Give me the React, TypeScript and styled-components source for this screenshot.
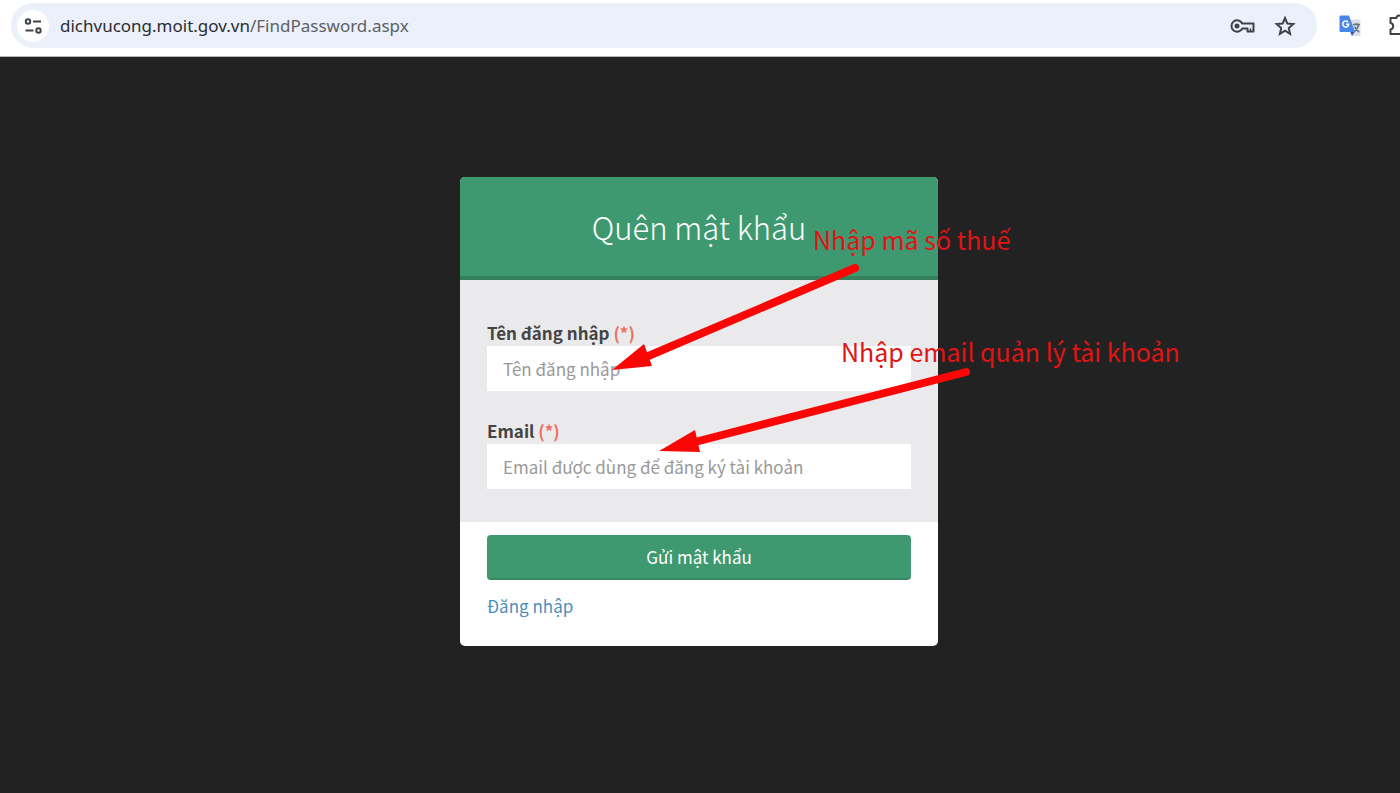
import React from "react";
import styled, { createGlobalStyle } from "styled-components";

const GlobalStyle = createGlobalStyle`
  *, *::before, *::after { box-sizing: border-box; }
  body { margin: 0; background: #222222; font-family: "Noto Sans CJK SC", "Noto Sans", sans-serif; }
`;

const Screen = styled.div`
  display: flex;
  flex-direction: column;
  min-height: 100vh;
  overflow-x: hidden;
`;

const Toolbar = styled.header`
  display: flex;
  align-items: center;
  height: 57px;
  padding: 0 0 5px 11px;
  background: #ffffff;
  border-bottom: 1px solid #b4b4b4;
`;

const AddressBar = styled.div`
  display: flex;
  flex: 1;
  align-items: center;
  height: 45px;
  padding: 0 16px 0 6px;
  border-radius: 23px;
  background: #ebf0fa;
`;

const IconButton = styled.button<{ $round?: boolean }>`
  display: flex;
  flex: none;
  align-items: center;
  justify-content: center;
  width: 32px;
  height: 32px;
  padding: 0;
  border: 0;
  border-radius: 16px;
  background: ${(p) => (p.$round ? "#ffffff" : "transparent")};
  color: #3f4247;
`;

const UrlText = styled.div`
  flex: 1;
  min-width: 0;
  padding-left: 11px;
  overflow: hidden;
  font-family: "Noto Sans", "Open Sans", sans-serif;
  font-size: 17px;
  line-height: 28px;
  white-space: nowrap;
  color: #2a2c30;
`;

const UrlPath = styled.span`
  color: #5c5f66;
`;

const AddressActions = styled.div`
  display: flex;
  gap: 10px;
`;

const Extensions = styled.div`
  display: flex;
  flex: none;
  gap: 18px;
  width: 83px;
  padding-left: 17px;
  overflow: hidden;
`;

const Page = styled.main`
  display: flex;
  flex: 1;
  justify-content: center;
  align-items: flex-start;
  padding: 120px 2px 0 0;
`;

const CardArea = styled.div`
  position: relative;
  width: 478px;
`;

const Card = styled.form`
  overflow: hidden;
  border-radius: 5px;
  background: #ffffff;
`;

const CardHeader = styled.div`
  padding: 26px 27px 25px;
  border-bottom: 4px solid #35805d;
  background: #3e9970;
  text-align: center;
`;

const Title = styled.h1`
  margin: 0;
  font-size: 31px;
  font-weight: 300;
  line-height: 48px;
  color: #ffffff;
`;

const CardBody = styled.div`
  display: flex;
  flex-direction: column;
  gap: 27px;
  padding: 40px 27px 33px;
  background: #eaeaec;
`;

const Field = styled.div`
  display: flex;
  flex-direction: column;
`;

const Label = styled.label`
  font-size: 17px;
  font-weight: 700;
  line-height: 26px;
  color: #444444;
`;

const Required = styled.span`
  color: #f0705f;
`;

const Input = styled.input`
  width: 100%;
  height: 45px;
  padding: 0 16px;
  border: 0;
  border-radius: 0;
  background: #ffffff;
  font-family: inherit;
  font-size: 17px;
  color: #444444;

  &::placeholder { color: #999999; opacity: 1; }
`;

const CardFooter = styled.div`
  display: flex;
  flex-direction: column;
  gap: 13px;
  padding: 13px 27px 27px;
`;

const Submit = styled.button`
  height: 45px;
  padding: 0;
  border: 0;
  border-bottom: 2px solid #388a65;
  border-radius: 4px;
  background: #3e9970;
  font-family: inherit;
  font-size: 17px;
  color: #ffffff;
`;

const LoginLink = styled.a`
  align-self: flex-start;
  font-size: 17px;
  line-height: 26px;
  color: #4a8fbc;
  text-decoration: none;
`;

const Note = styled.p<{ $x: number; $y: number }>`
  position: absolute;
  left: ${(p) => p.$x}px;
  top: ${(p) => p.$y}px;
  margin: 0;
  font-size: 25px;
  line-height: 32px;
  white-space: nowrap;
  color: #e01414;
`;

const Arrows = styled.svg`
  position: absolute;
  left: 0;
  top: 0;
  pointer-events: none;
`;

const TuneIcon = () => (
  <svg width="20" height="20" viewBox="0 0 20 20" fill="none" stroke="currentColor" strokeWidth="2">
    <circle cx="5" cy="5.500" r="2.2" />
    <path d="M10 5.500H18M2.500 14.500H10.500" />
    <circle cx="15.500" cy="14.500" r="2.200" />
  </svg>
);

const KeyIcon = () => (
  <svg width="26" height="20" viewBox="0 0 26 20" fill="none" stroke="currentColor" strokeWidth="2">
    <path d="M12.300 7.500A5.700 5.700 0 1 0 12.300 12.500H17.500V15.500H23.500V7.500Z" strokeLinejoin="round" />
    <path d="M20.500 12.500V15" strokeWidth="1.500" />
    <circle cx="7" cy="10" r="2.500" fill="currentColor" stroke="none" />
  </svg>
);

const StarIcon = () => (
  <svg width="22" height="22" viewBox="0 0 22 22" fill="none" stroke="currentColor" strokeWidth="2">
    <path d="M11 3L13.300 8.500L19.300 9L14.800 13L16.100 18.800L11 15.700L5.900 18.800L7.200 13L2.700 9L8.700 8.500Z" />
  </svg>
);

const TranslateIcon = () => (
  <svg width="22" height="22" viewBox="0 0 22 22">
    <path d="M9 4.500H20.500Q21.500 4.500 21.500 5.500V20Q21.500 21 20.500 21H13Z" fill="#dcdfe3" />
    <path d="M14 9.500H21M17.500 8V9.500M19.800 9.500Q18.500 14.500 14.500 17M15.500 11.500Q17 15 20.300 17.200" stroke="#5f7085" strokeWidth="1.400" fill="none" />
    <path d="M11 16.500H16L13 21Z" fill="#3257b8" />
    <path d="M1.500 0.500H10L16 17H1.500Q0.500 17 0.500 16V1.500Q0.500 0.500 1.500 0.500Z" fill="#4a86e8" />
    <path d="M9 7A3 3 0 1 0 9.700 9.300H7" stroke="#ffffff" strokeWidth="1.500" fill="none" />
  </svg>
);

const PuzzleIcon = () => (
  <svg width="24" height="24" viewBox="0 0 24 24" fill="none" stroke="currentColor" strokeWidth="2">
    <path d="M2.500 4H8.500A2.500 2.500 0 0 1 13.500 4H19V20H2.500V15.500A3.300 3.300 0 0 0 2.500 9Z" strokeLinejoin="round" />
  </svg>
);

export default function App() {
  return (
    <Screen>
      <GlobalStyle />
      <Toolbar>
        <AddressBar>
          <IconButton $round type="button" aria-label="Site information"><TuneIcon /></IconButton>
          <UrlText>dichvucong.moit.gov.vn<UrlPath>/FindPassword.aspx</UrlPath></UrlText>
          <AddressActions>
            <IconButton type="button" aria-label="Passwords"><KeyIcon /></IconButton>
            <IconButton type="button" aria-label="Bookmark"><StarIcon /></IconButton>
          </AddressActions>
        </AddressBar>
        <Extensions>
          <IconButton type="button" aria-label="Translate"><TranslateIcon /></IconButton>
          <IconButton type="button" aria-label="Extensions"><PuzzleIcon /></IconButton>
        </Extensions>
      </Toolbar>
      <Page>
        <CardArea>
          <Card onSubmit={(e) => e.preventDefault()}>
            <CardHeader><Title>Quên mật khẩu</Title></CardHeader>
            <CardBody>
              <Field>
                <Label htmlFor="username">Tên đăng nhập <Required>(*)</Required></Label>
                <Input id="username" type="text" placeholder="Tên đăng nhập" />
              </Field>
              <Field>
                <Label htmlFor="email">Email <Required>(*)</Required></Label>
                <Input id="email" type="email" placeholder="Email được dùng để đăng ký tài khoản" />
              </Field>
            </CardBody>
            <CardFooter>
              <Submit type="submit">Gửi mật khẩu</Submit>
              <LoginLink href="#login">Đăng nhập</LoginLink>
            </CardFooter>
          </Card>
          <Arrows width="520" height="290" viewBox="0 0 520 290" aria-hidden="true">
            <g stroke="#fa0606" strokeWidth="8" strokeLinecap="round">
              <path d="M395 91L186 180" />
              <path d="M506 195L235 265" />
            </g>
            <g fill="#fa0606">
              <path d="M152 193L184 167L192 189Z" />
              <path d="M199 274L235 253L240 275Z" />
            </g>
          </Arrows>
          <Note $x={353} $y={46}>Nhập mã số thuế</Note>
          <Note $x={381} $y={158}>Nhập email quản lý tài khoản</Note>
        </CardArea>
      </Page>
    </Screen>
  );
}
